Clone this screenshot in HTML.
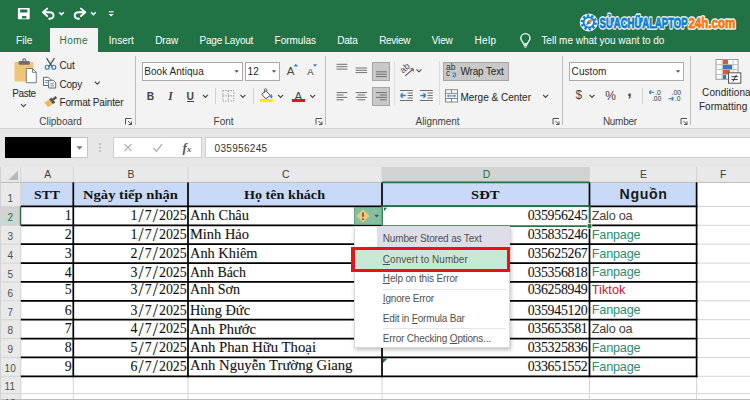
<!DOCTYPE html>
<html lang="vi"><head><meta charset="utf-8"><title>Excel - Convert to Number</title>
<style>
html,body{margin:0;padding:0}
body{width:750px;height:400px;overflow:hidden;position:relative;background:#fff;font-family:"Liberation Sans",sans-serif;font-size:10px;color:#262626}
.a{position:absolute;white-space:nowrap}
.t{position:absolute;white-space:nowrap}
.sep{position:absolute;width:1px;background:#c8c8c8}
.box{position:absolute;background:#fff;border:1px solid #ababab;box-sizing:border-box}
u{text-decoration:underline;text-underline-offset:1px;text-decoration-thickness:1px}
svg{position:absolute;left:0;top:0;overflow:visible}
</style></head><body>

<div class="a" style="left:0;top:0;width:750px;height:52px;background:#217346"></div>
<div class="a" style="left:50px;top:28px;width:48px;height:25px;background:#f3f3f3"></div>
<svg width="750" height="52" viewBox="0 0 750 52" fill="none" stroke="#fff" stroke-width="1.400">
<!-- save -->
<rect x="17.900" y="7.900" width="11.800" height="11.400" rx=".8" fill="#fff" stroke="none"/><rect x="20.200" y="9.500" width="7.200" height="3" fill="#217346" stroke="none"/><rect x="22" y="16.100" width="4.400" height="2.300" fill="#217346" stroke="none"/>
<!-- undo -->
<path d="M47.200 8.600l-4.200 3.700 4.200 3.700" stroke-width="1.900" stroke-linejoin="round" stroke-linecap="round"/><path d="M43.400 12.300h5.600c3 0 4.500 1.700 4.500 3.300s-1.500 3.200-4.300 3.200" stroke-width="1.900" stroke-linecap="round"/>
<path d="M59.200 12.300l2.300 2.300 2.300-2.300" stroke-width="1.500"/>
<!-- redo -->
<path d="M81 8.600l4.200 3.700-4.200 3.700" stroke-width="1.900" stroke-linejoin="round" stroke-linecap="round"/><path d="M84.800 12.300h-5.600c-3 0-4.500 1.700-4.500 3.300s1.500 3.200 4.300 3.200" stroke-width="1.900" stroke-linecap="round"/>
<path d="M91.100 12.300l2.300 2.300 2.300-2.300" stroke-width="1.500"/>
<!-- customize -->
<path d="M108.800 11.800h4.800" stroke-width="1.100"/><path d="M108.700 13.900h5l-2.500 2.700z" fill="#fff" stroke="none"/>
<!-- bulb -->
<g stroke-width="1.300"><path d="M523.500 44c0-2-2.700-3-2.700-5.700a4.600 4.600 0 0 1 9.200 0c0 2.700-2.700 3.700-2.700 5.700z" stroke-linejoin="round"/><path d="M523.600 45.600h3.600" stroke-width="1.100"/><path d="M524.200 47.100h2.400" stroke-width="1"/></g>
</svg>
<svg width="750" height="52" viewBox="0 0 750 52">
<g transform="translate(588.800 22.400)"><circle r="9" fill="#fff"/><circle r="6.900" fill="none" stroke="#1580d4" stroke-width="2.600" stroke-dasharray="2.400 1.935"/><circle r="6.100" fill="#1580d4"/><circle r="4.200" fill="#fff"/><path d="M-2.800 2.800l1.700-4.500 4.500-1.700-1.700 4.500z" fill="#1580d4"/><path d="M3.400-3.400l-1.700 4.500-2.800-2.800z" fill="#f5821f"/></g>
<g font-family="Liberation Sans, sans-serif" font-weight="bold" font-size="14.600" stroke-linejoin="round">
<text x="599.600" y="27.600" textLength="88" lengthAdjust="spacingAndGlyphs" fill="#fff" stroke="#fff" stroke-width="3.400">SỬACHỮALAPTOP</text>
<text x="688.400" y="27.600" textLength="46.800" lengthAdjust="spacingAndGlyphs" fill="#fff" stroke="#fff" stroke-width="3.400">24h.com</text>
<text x="599.600" y="27.600" textLength="88" lengthAdjust="spacingAndGlyphs" fill="#0f7bd2" stroke="#0f7bd2" stroke-width=".9">SỬACHỮALAPTOP</text>
<text x="688.400" y="27.600" textLength="46.800" lengthAdjust="spacingAndGlyphs" fill="#f47a18" stroke="#f47a18" stroke-width=".9">24h.com</text>
</g>
</svg>
<div class="a" style="left:0;top:52px;width:750px;height:76px;background:#f3f3f3"></div>
<div class="a" style="left:0;top:128px;width:750px;height:39px;background:#e6e6e6;border-top:1px solid #d2d2d2;box-sizing:border-box"></div>
<div class="sep" style="left:135px;top:56px;height:69px;background:#bdbdbd"></div>
<div class="sep" style="left:325px;top:56px;height:69px;background:#bdbdbd"></div>
<div class="sep" style="left:562px;top:56px;height:69px;background:#bdbdbd"></div>
<div class="sep" style="left:690px;top:56px;height:69px;background:#bdbdbd"></div>
<div class="sep" style="left:215px;top:88px;height:16px;background:#d0d0d0"></div>
<div class="sep" style="left:253px;top:88px;height:16px;background:#d0d0d0"></div>
<div class="sep" style="left:394px;top:61px;height:44px;background:#dedede"></div>
<div class="sep" style="left:439px;top:61px;height:44px;background:#dedede"></div>
<div class="sep" style="left:642px;top:88px;height:16px;background:#d0d0d0"></div>
<div class="box" style="left:142px;top:62px;width:101px;height:19px"></div>
<div class="box" style="left:245px;top:62px;width:35px;height:19px"></div>
<div class="box" style="left:569px;top:62px;width:115px;height:19px"></div>
<div class="a" style="left:372px;top:61.500px;width:18px;height:19px;background:#c8c8c8;border:1px solid #a6a6a6;box-sizing:border-box"></div>
<div class="a" style="left:372px;top:87px;width:18px;height:19px;background:#c8c8c8;border:1px solid #a6a6a6;box-sizing:border-box"></div>
<div class="a" style="left:443px;top:61.500px;width:66px;height:19px;background:#c8c8c8;border:1px solid #a6a6a6;box-sizing:border-box"></div>
<div class="a" style="left:259.600px;top:99.200px;width:13.400px;height:3.200px;background:#ffeb00"></div>
<div class="a" style="left:291.500px;top:99.200px;width:13.700px;height:3.200px;background:#e81123"></div>
<svg width="750" height="135" viewBox="0 0 750 135" fill="none">
<!-- paste -->
<rect x="14.500" y="62" width="19" height="19.600" rx="1" fill="#efc678"/><rect x="18.600" y="61" width="11.200" height="3.800" rx=".8" fill="#6e6e6e"/><circle cx="24.200" cy="60.300" r="1.500" stroke="#6e6e6e" stroke-width="1.200"/>
<path d="M26.300 68.500h6.200l3.800 3.800v10.400h-10z" fill="#fff" stroke="#7a7a7a" stroke-width="1"/><path d="M32.500 68.500v3.800h3.800" stroke="#7a7a7a" stroke-width="1"/>
<path d="M21 104.200l2.500 2.500 2.500-2.500" stroke="#444" stroke-width="1.100"/>
<!-- cut -->
<path d="M46.500 58.200l6 9M54.500 58.200l-6 9" stroke="#555" stroke-width="1.300"/><circle cx="47.200" cy="67.200" r="2" stroke="#2b7cd3" stroke-width="1.100"/><circle cx="53.800" cy="67.200" r="2" stroke="#2b7cd3" stroke-width="1.100"/>
<!-- copy -->
<path d="M43.500 77.300h5l2.200 2.200v6h-7.200z" fill="#fff" stroke="#666" stroke-width="1"/><path d="M45.200 80.500h3.500M45.200 82.700h2.500" stroke="#2b7cd3" stroke-width=".9"/><path d="M48.700 80.300h4.600l2.400 2.400v5.300h-7z" fill="#fff" stroke="#666" stroke-width="1"/><path d="M50.500 83.800h3.500M50.500 85.900h3.500" stroke="#2b7cd3" stroke-width=".9"/>
<path d="M94.800 81.700l2.500 2.500 2.500-2.500" stroke="#444" stroke-width="1.100"/>
<!-- format painter -->
<path d="M44.300 102.600l5.200-3.400 3.600 4.600-5 3.400z" fill="#f0b860"/><path d="M49.200 99.200l2.300-1.600 3.800 4.800-2.300 1.500z" fill="#555"/><path d="M52.200 98.700l3.400-2.800 1.600 2-3.400 2.700z" fill="#555"/>
<!-- dialog launchers -->
<g stroke="#555" stroke-width="1"><path d="M125.500 124.500v-6h6" transform="translate(0 0)"/><path d="M128 121l3.500 3.500m0-3v3h-3"/></g>
<g stroke="#555" stroke-width="1" transform="translate(190.500 0)"><path d="M125.500 124.500v-6h6"/><path d="M128 121l3.500 3.500m0-3v3h-3"/></g>
<g stroke="#555" stroke-width="1" transform="translate(427.500 0)"><path d="M125.500 124.500v-6h6"/><path d="M128 121l3.500 3.500m0-3v3h-3"/></g>
<g stroke="#555" stroke-width="1" transform="translate(555.500 0)"><path d="M125.500 124.500v-6h6"/><path d="M128 121l3.500 3.500m0-3v3h-3"/></g>
<!-- combo arrows -->
<path d="M234.500 70.300h4.400l-2.200 2.400z" fill="#555"/><path d="M271.800 70.300h4.400l-2.200 2.400z" fill="#555"/><path d="M675.900 70.300h4.400l-2.200 2.400z" fill="#555"/>
<!-- chevrons -->
<g stroke="#444" stroke-width="1.100"><path d="M202.900 94.900l2.500 2.500 2.500-2.500"/><path d="M240.400 94.900l2.500 2.500 2.500-2.500"/><path d="M278.100 94.900l2.500 2.500 2.500-2.500"/><path d="M310.100 94.900l2.500 2.500 2.500-2.500"/><path d="M416.500 69.300l2.500 2.500 2.500-2.500"/><path d="M543.100 94.900l2.500 2.500 2.500-2.500"/><path d="M589.500 94.900l2.500 2.500 2.500-2.500"/></g>
<!-- A grow/shrink -->
<path d="M293.600 66.500l2.200-2.800 2.200 2.800z" fill="#2b7cd3"/><path d="M313 64.200l2 2.600 2-2.600z" fill="#2b7cd3"/>
<!-- borders icon -->
<rect x="222.800" y="90.600" width="11" height="10.400" stroke="#9c9c9c" stroke-width="1" stroke-dasharray="1.400 1.200"/><path d="M228.300 90.600v10.400M222.800 95.800h11" stroke="#9c9c9c" stroke-width="1" stroke-dasharray="1.400 1.200"/>
<!-- fill bucket -->
<g transform="translate(-1.300 1)"><path d="M263 93.200l4.200-3.400 4.300 4.600-4.400 3.400z" fill="#fff" stroke="#555" stroke-width="1" stroke-linejoin="round"/><path d="M265.700 92v-3.300c0-1.300 2.300-1.300 2.300 0v2" stroke="#555" stroke-width=".9"/><path d="M272.600 93.400q1.800 2.600 0 3.700-1.800-1.100 0-3.700z" fill="#2b7cd3" stroke="#2b7cd3" stroke-width=".6"/></g>
<!-- align icons -->
<g stroke="#707070" stroke-width="1"><path d="M336.500 64.300h10.800M336.500 66.700h10.800M336.500 69.100h10.800"/><path d="M355.600 68h11.500M355.600 70.300h11.500M355.600 72.600h11.500"/><path d="M376 71.800h10.800M376 74.200h10.800M376 76.600h10.800"/>
<path d="M336.500 92.600h10.800M336.500 95h7M336.500 97.400h10.800M336.500 99.800h7"/><path d="M355.600 92.600h11.500M357.600 95h7.500M355.600 97.400h11.500M357.600 99.800h7.500"/><path d="M376 92.600h10.800M379.800 95h7M376 97.400h10.800M379.800 99.800h7"/></g>
<!-- orientation -->
<path d="M405.200 75.800l8-7m0 0h-2.800m2.800 0v2.800" stroke="#555" stroke-width="1.100"/>
<!-- indents -->
<g stroke="#707070" stroke-width="1"><path d="M400 90.500h12.900M407.600 93h5.300M407.600 95.500h5.300M407.600 98h5.300M400 100.500h12.900"/><path d="M419.900 90.500h12.900M427.500 93h5.300M427.500 95.500h5.300M427.500 98h5.300M419.900 100.500h12.900"/></g>
<path d="M405.800 95.500h-5.300m0 0l2.200-2.200m-2.200 2.200l2.200 2.200" stroke="#2b7cd3" stroke-width="1.300"/><path d="M420.400 95.500h5.300m0 0l-2.200-2.200m2.200 2.200l-2.200 2.200" stroke="#2b7cd3" stroke-width="1.300"/>
<!-- wrap arrow -->
<path d="M452.400 73.200h3.300v3h-2.800m0 0l1.400-1.400m-1.400 1.400l1.400 1.400" stroke="#2b7cd3" stroke-width="1"/>
<!-- merge icon -->
<rect x="445.500" y="89.800" width="12" height="12.200" fill="#fff" stroke="#858585" stroke-width="1"/><path d="M445.500 93.300h12M445.500 98.500h12M451.500 89.800v3.500M451.500 98.500v3.500" stroke="#858585" stroke-width="1"/><path d="M447.500 95.900h8m-8 0l1.500-1.500m-1.500 1.500l1.500 1.500m6.500-1.500l-1.500-1.500m1.500 1.500l-1.500 1.500" stroke="#2b7cd3" stroke-width="1"/>
<!-- decimal arrows -->
<path d="M654.200 92.300h-5m0 0l1.800-1.800m-1.800 1.800l1.800 1.800" stroke="#2b7cd3" stroke-width="1.100"/><path d="M668.500 98.700h5m0 0l-1.800-1.800m1.800 1.800l-1.800 1.800" stroke="#2b7cd3" stroke-width="1.100"/>
<!-- conditional formatting -->
<rect x="716" y="59.500" width="22" height="19.800" fill="#fff" stroke="#9a9a9a" stroke-width="1"/><path d="M722 59.500v19.800M733 59.500v19.800M716 64.500h22M716 69.500h22M716 74.500h22" stroke="#c0c0c0" stroke-width="1"/>
<rect x="722.800" y="60" width="5.200" height="4.200" fill="#dc5a36"/><rect x="722.800" y="65" width="9.200" height="4.200" fill="#3f74bd"/><rect x="722.800" y="70" width="7.200" height="4.200" fill="#dc5a36"/><rect x="722.800" y="75" width="3.400" height="4" fill="#3f74bd"/>
<rect x="728.500" y="72.800" width="12.300" height="10.400" fill="#fff" stroke="#555" stroke-width="1"/><path d="M731.500 76.700h6.300M731.500 79.600h6.300M736.500 74.800l-3.600 6.800" stroke="#333" stroke-width="1"/>
</svg>
<!-- small glyph labels inside ribbon (real text) -->
<div class="t" style="left:286.800px;top:65px;font-size:11.500px;line-height:12px;color:#444">A</div>
<div class="t" style="left:307.300px;top:67.200px;font-size:9.500px;line-height:10px;color:#3a3a3a">A</div>
<div class="t" style="left:146.800px;top:91px;font-size:10.300px;line-height:11px;font-weight:bold;color:#444">B</div>
<div class="t" style="left:168.300px;top:89.800px;font-size:11.500px;line-height:12px;font-weight:bold;font-style:italic;color:#444;font-family:'Liberation Serif',serif">I</div>
<div class="t" style="left:186.600px;top:91px;font-size:10.300px;line-height:11px;font-weight:bold;color:#444;border-bottom:1px solid #444;height:9.800px">U</div>
<div class="t" style="left:294.600px;top:89.600px;font-size:11.500px;line-height:12px;color:#444">A</div>
<div class="t" style="left:446px;top:63.800px;font-size:8.500px;line-height:6.500px;color:#333">ab<br>c</div>
<div class="t" style="left:400px;top:64px;font-size:9px;line-height:9px;color:#444;transform:rotate(-42deg);transform-origin:50% 50%">ab</div>
<div class="t" style="left:575.400px;top:89px;font-size:12px;line-height:13px;color:#444;transform:scaleY(1.12)">$</div>
<div class="t" style="left:605.200px;top:90px;font-size:12px;line-height:13px;color:#444">%</div>
<div class="t" style="left:627.300px;top:82.700px;font-size:16px;line-height:16px;font-weight:bold;color:#444">,</div>
<div class="t" style="left:651.900px;top:89.700px;font-size:6.800px;line-height:6.300px;color:#333;text-align:right;width:9px">.0<br>.00</div>
<div class="t" style="left:671.500px;top:89.700px;font-size:6.800px;line-height:6.300px;color:#333;text-align:right;width:9px">.00<br>.0</div>
<!-- formula bar -->
<div class="box" style="left:5px;top:137px;width:83px;height:21px;border-color:#c6c6c6"></div>
<div class="a" style="left:5px;top:137px;width:66.400px;height:21px;background:#000"></div>
<div class="box" style="left:113px;top:137px;width:89px;height:21px;border-color:#d0d0d0"></div>
<div class="box" style="left:205px;top:137px;width:560px;height:21px;border-color:#d0d0d0"></div>
<div class="t" style="left:182.600px;top:140.500px;font-size:13px;line-height:13px;font-style:italic;font-weight:bold;color:#555;font-family:'Liberation Serif',serif">f<span style="font-size:8.500px">x</span></div>
<svg width="750" height="170" viewBox="0 0 750 170" fill="none">
<path d="M76.500 146.200h6l-3 3.500z" fill="#777"/>
<circle cx="100" cy="144" r=".8" fill="#999"/><circle cx="100" cy="147.500" r=".8" fill="#999"/><circle cx="100" cy="151" r=".8" fill="#999"/>
<path d="M124.500 144l7 7m0-7l-7 7" stroke="#b4b4b4" stroke-width="1.200"/><path d="M153.500 148l3 3.500 5.500-7.500" stroke="#b4b4b4" stroke-width="1.300"/>
</svg>
<!-- headers -->
<div class="a" style="left:0;top:167px;width:750px;height:15.400px;background:#e9e9e9"></div>
<div class="a" style="left:382px;top:167px;width:207.500px;height:15.400px;background:#d2d2d2"></div>
<div class="a" style="left:0;top:182.400px;width:20.800px;height:218px;background:#e9e9e9"></div>
<div class="a" style="left:0;top:206.450px;width:20.800px;height:18.870px;background:#d2d2d2"></div>
<div class="a" style="left:20.800px;top:182.400px;width:675.800px;height:24px;background:#c9daf8"></div>

<svg width="750" height="400" viewBox="0 0 750 400" fill="none">
<path d="M18 170.500v9.500h-9.500z" fill="#b8b8b8"/>
<path d="M20.8 167V400" stroke="#d4d4d4" stroke-width="1"/>
<path d="M73.3 167V400" stroke="#d4d4d4" stroke-width="1"/>
<path d="M188.0 167V400" stroke="#d4d4d4" stroke-width="1"/>
<path d="M382.0 167V400" stroke="#d4d4d4" stroke-width="1"/>
<path d="M589.5 167V400" stroke="#d4d4d4" stroke-width="1"/>
<path d="M696.6 167V400" stroke="#d4d4d4" stroke-width="1"/>
<path d="M0 182.40H750" stroke="#bdbdbd" stroke-width="1"/>
<path d="M0 206.45H750" stroke="#d4d4d4" stroke-width="1"/>
<path d="M0 225.32H750" stroke="#d4d4d4" stroke-width="1"/>
<path d="M0 244.19H750" stroke="#d4d4d4" stroke-width="1"/>
<path d="M0 263.06H750" stroke="#d4d4d4" stroke-width="1"/>
<path d="M0 281.93H750" stroke="#d4d4d4" stroke-width="1"/>
<path d="M0 300.80H750" stroke="#d4d4d4" stroke-width="1"/>
<path d="M0 319.67H750" stroke="#d4d4d4" stroke-width="1"/>
<path d="M0 338.54H750" stroke="#d4d4d4" stroke-width="1"/>
<path d="M0 357.41H750" stroke="#d4d4d4" stroke-width="1"/>
<path d="M0 376.28H750" stroke="#d4d4d4" stroke-width="1"/>
<path d="M0 393.65H750" stroke="#d4d4d4" stroke-width="1"/>
<path d="M0 410.80H750" stroke="#d4d4d4" stroke-width="1"/>
<path d="M20.8 206.45H697.4" stroke="#000" stroke-width="1.700"/>
<path d="M20.8 225.32H697.4" stroke="#000" stroke-width="1.700"/>
<path d="M20.8 244.19H697.4" stroke="#000" stroke-width="1.700"/>
<path d="M20.8 263.06H697.4" stroke="#000" stroke-width="1.700"/>
<path d="M20.8 281.93H697.4" stroke="#000" stroke-width="1.700"/>
<path d="M20.8 300.80H697.4" stroke="#000" stroke-width="1.700"/>
<path d="M20.8 319.67H697.4" stroke="#000" stroke-width="1.700"/>
<path d="M20.8 338.54H697.4" stroke="#000" stroke-width="1.700"/>
<path d="M20.8 357.41H697.4" stroke="#000" stroke-width="1.700"/>
<path d="M20.8 376.28H697.4" stroke="#000" stroke-width="1.700"/>
<path d="M73.3 182.4V377.13" stroke="#000" stroke-width="1.700"/>
<path d="M188.0 182.4V377.13" stroke="#000" stroke-width="1.700"/>
<path d="M382.0 182.4V377.13" stroke="#000" stroke-width="1.700"/>
<path d="M589.5 182.4V377.13" stroke="#000" stroke-width="1.700"/>
<path d="M696.6 182.4V377.13" stroke="#000" stroke-width="1.700"/>
<path d="M382.0 182.4H589.5" stroke="#217346" stroke-width="1.800"/>
<path d="M20.500 206.45V225.32" stroke="#217346" stroke-width="1.400"/>
<rect x="382.0" y="206.25" width="207.5" height="19.87" stroke="#217346" stroke-width="1.700" fill="#fff"/>
<rect x="587.2" y="223.7" width="4.600" height="4.600" fill="#217346" stroke="#fff" stroke-width=".8"/>
<path d="M383.9 207.85h3.300l-3.300 3.300z" fill="#217346"/>
<path d="M383.0 358.4h4.500l-4.500 4.500z" fill="#217346"/>
</svg>
<div class="a" style="left:354.200px;top:206.800px;width:27.600px;height:18.600px;background:#84c0a0;border:1px solid #66a584;box-sizing:border-box"></div>
<svg width="750" height="400" viewBox="0 0 750 400" fill="none">
<path d="M363 209.500l6.500 6.500-6.500 6.500-6.500-6.500z" fill="#f6c776"/><path d="M363 212.500v4.200" stroke="#45455a" stroke-width="1.500"/><circle cx="363" cy="219.200" r=".9" fill="#45455a"/>
<path d="M374.200 214.800h5l-2.500 2.800z" fill="#505050"/>
</svg>
<div class="a" style="left:354px;top:226px;width:156px;height:122.400px;background:#fff;box-shadow:1px 2px 4px rgba(0,0,0,.25);border:1px solid #d9d9d9;box-sizing:border-box"></div>
<div class="a" style="left:377px;top:227px;width:133px;height:19.600px;background:#dedee9"></div>
<div class="a" style="left:351px;top:247px;width:159.200px;height:25px;background:#c7e9d3;border:3px solid #ee1111;border-left-width:4.200px;box-sizing:border-box"></div>
<div class="a" style="left:383px;top:289px;width:123px;height:1px;background:#e6e6e6"></div>
<div class="a" style="left:383px;top:328px;width:123px;height:1px;background:#e6e6e6"></div>
<div class="a" style="left:0;top:399px;width:750px;height:1px;background:#bcbcbc"></div>
<div class="a" style="left:0;top:167px;width:1px;height:233px;background:#d2d2d2"></div>

<div class="t" id="t0" style="left:16.00px;top:35.53px;font-size:10px;line-height:10px;letter-spacing:0.058px;color:#fff">File</div>
<div class="t" id="t1" style="left:59.60px;top:35.53px;font-size:10px;line-height:10px;letter-spacing:0.471px;color:#217346">Home</div>
<div class="t" id="t2" style="left:108.80px;top:35.53px;font-size:10px;line-height:10px;letter-spacing:-0.003px;color:#fff">Insert</div>
<div class="t" id="t3" style="left:155.20px;top:35.53px;font-size:10px;line-height:10px;letter-spacing:-0.115px;color:#fff">Draw</div>
<div class="t" id="t4" style="left:199.60px;top:35.53px;font-size:10px;line-height:10px;letter-spacing:-0.237px;color:#fff">Page Layout</div>
<div class="t" id="t5" style="left:274.60px;top:35.53px;font-size:10px;line-height:10px;letter-spacing:-0.055px;color:#fff">Formulas</div>
<div class="t" id="t6" style="left:337.20px;top:35.53px;font-size:10px;line-height:10px;letter-spacing:-0.175px;color:#fff">Data</div>
<div class="t" id="t7" style="left:379.20px;top:35.53px;font-size:10px;line-height:10px;letter-spacing:-0.319px;color:#fff">Review</div>
<div class="t" id="t8" style="left:431.70px;top:35.53px;font-size:10px;line-height:10px;letter-spacing:-0.133px;color:#fff">View</div>
<div class="t" id="t9" style="left:474.60px;top:35.53px;font-size:10px;line-height:10px;letter-spacing:0.307px;color:#fff">Help</div>
<div class="t" id="t10" style="left:541.40px;top:35.53px;font-size:10px;line-height:10px;letter-spacing:-0.016px;color:#fff">Tell me what you want to do</div>
<div class="t" id="t11" style="left:12.30px;top:88.53px;font-size:10px;line-height:10px;letter-spacing:-0.445px;color:#262626">Paste</div>
<div class="t" id="t12" style="left:59.50px;top:60.53px;font-size:10px;line-height:10px;letter-spacing:-0.131px;color:#262626">Cut</div>
<div class="t" id="t13" style="left:59.50px;top:79.64px;font-size:10px;line-height:10px;letter-spacing:-0.220px;color:#262626">Copy</div>
<div class="t" id="t14" style="left:59.50px;top:98.14px;font-size:10px;line-height:10px;letter-spacing:-0.157px;color:#262626">Format Painter</div>
<div class="t" id="t15" style="left:39.30px;top:117.44px;font-size:10px;line-height:10px;letter-spacing:-0.039px;color:#444">Clipboard</div>
<div class="t" id="t16" style="left:213.60px;top:117.23px;font-size:10px;line-height:10px;letter-spacing:-0.005px;color:#444">Font</div>
<div class="t" id="t17" style="left:415.60px;top:117.23px;font-size:10px;line-height:10px;letter-spacing:-0.059px;color:#444">Alignment</div>
<div class="t" id="t18" style="left:602.90px;top:117.23px;font-size:10px;line-height:10px;letter-spacing:-0.276px;color:#444">Number</div>
<div class="t" id="t19" style="left:144.30px;top:66.83px;font-size:10px;line-height:10px;letter-spacing:0.042px;color:#262626">Book Antiqua</div>
<div class="t" id="t20" style="left:247.60px;top:66.83px;font-size:10px;line-height:10px;letter-spacing:-0.025px;color:#262626">12</div>
<div class="t" id="t21" style="left:571.60px;top:66.83px;font-size:10px;line-height:10px;letter-spacing:0.069px;color:#262626">Custom</div>
<div class="t" id="t22" style="left:460.40px;top:67.44px;font-size:10px;line-height:10px;letter-spacing:-0.157px;color:#262626">Wrap Text</div>
<div class="t" id="t23" style="left:460.40px;top:92.83px;font-size:10px;line-height:10px;color:#262626">Merge &amp; Center</div>
<div class="t" id="t24" style="left:702.10px;top:88.34px;font-size:10px;line-height:10px;letter-spacing:0.075px;color:#262626">Conditional</div>
<div class="t" id="t25" style="left:698.90px;top:101.64px;font-size:10px;line-height:10px;letter-spacing:0.056px;color:#262626">Formatting</div>
<div class="t" id="t26" style="left:214.60px;top:144.13px;font-size:10px;line-height:10px;letter-spacing:0.305px;color:#333">035956245</div>
<div class="t" id="t27" style="left:44.20px;top:170.10px;font-size:10.4px;line-height:10.4px;color:#404040">A</div>
<div class="t" id="t28" style="left:127.50px;top:170.10px;font-size:10.4px;line-height:10.4px;color:#404040">B</div>
<div class="t" id="t29" style="left:282.10px;top:170.10px;font-size:10.4px;line-height:10.4px;color:#404040">C</div>
<div class="t" id="t30" style="left:482.70px;top:170.10px;font-size:10.4px;line-height:10.4px;color:#217346">D</div>
<div class="t" id="t31" style="left:640.10px;top:170.10px;font-size:10.4px;line-height:10.4px;color:#404040">E</div>
<div class="t" id="t32" style="left:720.10px;top:170.10px;font-size:10.4px;line-height:10.4px;color:#404040">F</div>
<div class="t" id="t33" style="left:7.40px;top:193.94px;font-size:10px;line-height:10px;color:#505050">1</div>
<div class="t" id="t34" style="left:7.40px;top:213.25px;font-size:10px;line-height:10px;color:#217346">2</div>
<div class="t" id="t35" style="left:7.40px;top:232.12px;font-size:10px;line-height:10px;color:#505050">3</div>
<div class="t" id="t36" style="left:7.40px;top:250.99px;font-size:10px;line-height:10px;color:#505050">4</div>
<div class="t" id="t37" style="left:7.40px;top:269.87px;font-size:10px;line-height:10px;color:#505050">5</div>
<div class="t" id="t38" style="left:7.40px;top:288.74px;font-size:10px;line-height:10px;color:#505050">6</div>
<div class="t" id="t39" style="left:7.40px;top:307.60px;font-size:10px;line-height:10px;color:#505050">7</div>
<div class="t" id="t40" style="left:7.40px;top:326.47px;font-size:10px;line-height:10px;color:#505050">8</div>
<div class="t" id="t41" style="left:7.40px;top:345.34px;font-size:10px;line-height:10px;color:#505050">9</div>
<div class="t" id="t42" style="left:4.60px;top:364.21px;font-size:10px;line-height:10px;color:#505050">10</div>
<div class="t" id="t43" style="left:4.60px;top:381.58px;font-size:10px;line-height:10px;color:#505050">11</div>
<div class="t" id="t44" style="left:4.60px;top:398.74px;font-size:10px;line-height:10px;color:#505050">12</div>
<div class="t" id="t45" style="left:34.00px;top:187.88px;font-size:13.4px;line-height:13.4px;font-family:'Liberation Serif',serif;transform:scaleX(1.0272);transform-origin:left center;font-weight:bold;color:#111">STT</div>
<div class="t" id="t46" style="left:82.90px;top:187.88px;font-size:13.4px;line-height:13.4px;font-family:'Liberation Serif',serif;transform:scaleX(1.0912);transform-origin:left center;font-weight:bold;color:#111">Ngày tiếp nhận</div>
<div class="t" id="t47" style="left:244.40px;top:187.88px;font-size:13.4px;line-height:13.4px;font-family:'Liberation Serif',serif;transform:scaleX(1.0569);transform-origin:left center;font-weight:bold;color:#111">Họ tên khách</div>
<div class="t" id="t48" style="left:470.90px;top:187.88px;font-size:13.4px;line-height:13.4px;font-family:'Liberation Serif',serif;transform:scaleX(1.0935);transform-origin:left center;font-weight:bold;color:#111">SĐT</div>
<div class="t" id="t49" style="left:619.60px;top:187.48px;font-size:14.2px;line-height:14.2px;letter-spacing:0.620px;font-weight:bold;color:#1a1a1a">Nguồn</div>
<div class="t" id="t50" style="right:678.20px;top:209.18px;font-size:13.9px;line-height:13.9px;font-family:'Liberation Serif',serif;color:#111;-webkit-text-stroke:.08px #111">1</div>
<div class="t" id="t51" style="left:130.40px;top:209.18px;font-size:13.9px;line-height:13.9px;font-family:'Liberation Serif',serif;letter-spacing:-0.074px;color:#111;-webkit-text-stroke:.08px #111">1<span style="font-size:18.500px;line-height:0;position:relative;top:2.300px;padding:0 1.200px">/</span>7<span style="font-size:18.500px;line-height:0;position:relative;top:2.300px;padding:0 1.200px">/</span>2025</div>
<div class="t" id="t52" style="left:190.40px;top:209.35px;font-size:13.7px;line-height:13.7px;font-family:'Liberation Serif',serif;transform:scaleX(1.0556);transform-origin:left center;color:#111;-webkit-text-stroke:.1px #111">Anh Châu</div>
<div class="t" id="t53" style="left:527.70px;top:209.18px;font-size:13.9px;line-height:13.9px;font-family:'Liberation Serif',serif;letter-spacing:-0.302px;color:#111;-webkit-text-stroke:.08px #111">035956245</div>
<div class="t" id="t54" style="left:591.80px;top:209.77px;font-size:12.7px;line-height:12.7px;letter-spacing:-0.255px;color:#4a4242">Zalo oa</div>
<div class="t" id="t55" style="right:678.20px;top:228.05px;font-size:13.9px;line-height:13.9px;font-family:'Liberation Serif',serif;color:#111;-webkit-text-stroke:.08px #111">2</div>
<div class="t" id="t56" style="left:130.40px;top:228.05px;font-size:13.9px;line-height:13.9px;font-family:'Liberation Serif',serif;letter-spacing:-0.074px;color:#111;-webkit-text-stroke:.08px #111">1<span style="font-size:18.500px;line-height:0;position:relative;top:2.300px;padding:0 1.200px">/</span>7<span style="font-size:18.500px;line-height:0;position:relative;top:2.300px;padding:0 1.200px">/</span>2025</div>
<div class="t" id="t57" style="left:190.40px;top:228.22px;font-size:13.7px;line-height:13.7px;font-family:'Liberation Serif',serif;transform:scaleX(1.0556);transform-origin:left center;color:#111;-webkit-text-stroke:.1px #111">Minh Hảo</div>
<div class="t" id="t58" style="left:527.70px;top:228.05px;font-size:13.9px;line-height:13.9px;font-family:'Liberation Serif',serif;letter-spacing:-0.302px;color:#111;-webkit-text-stroke:.08px #111">035835246</div>
<div class="t" id="t59" style="left:591.80px;top:228.64px;font-size:12.7px;line-height:12.7px;letter-spacing:-0.216px;color:#2e8b72">Fanpage</div>
<div class="t" id="t60" style="right:678.20px;top:246.92px;font-size:13.9px;line-height:13.9px;font-family:'Liberation Serif',serif;color:#111;-webkit-text-stroke:.08px #111">3</div>
<div class="t" id="t61" style="left:130.40px;top:246.92px;font-size:13.9px;line-height:13.9px;font-family:'Liberation Serif',serif;letter-spacing:-0.074px;color:#111;-webkit-text-stroke:.08px #111">2<span style="font-size:18.500px;line-height:0;position:relative;top:2.300px;padding:0 1.200px">/</span>7<span style="font-size:18.500px;line-height:0;position:relative;top:2.300px;padding:0 1.200px">/</span>2025</div>
<div class="t" id="t62" style="left:190.40px;top:247.09px;font-size:13.7px;line-height:13.7px;font-family:'Liberation Serif',serif;transform:scaleX(1.0506);transform-origin:left center;color:#111;-webkit-text-stroke:.1px #111">Anh Khiêm</div>
<div class="t" id="t63" style="left:527.70px;top:246.92px;font-size:13.9px;line-height:13.9px;font-family:'Liberation Serif',serif;letter-spacing:-0.302px;color:#111;-webkit-text-stroke:.08px #111">035625267</div>
<div class="t" id="t64" style="left:591.80px;top:247.51px;font-size:12.7px;line-height:12.7px;letter-spacing:-0.216px;color:#2e8b72">Fanpage</div>
<div class="t" id="t65" style="right:678.20px;top:265.79px;font-size:13.9px;line-height:13.9px;font-family:'Liberation Serif',serif;color:#111;-webkit-text-stroke:.08px #111">4</div>
<div class="t" id="t66" style="left:130.40px;top:265.79px;font-size:13.9px;line-height:13.9px;font-family:'Liberation Serif',serif;letter-spacing:-0.074px;color:#111;-webkit-text-stroke:.08px #111">3<span style="font-size:18.500px;line-height:0;position:relative;top:2.300px;padding:0 1.200px">/</span>7<span style="font-size:18.500px;line-height:0;position:relative;top:2.300px;padding:0 1.200px">/</span>2025</div>
<div class="t" id="t67" style="left:190.40px;top:265.96px;font-size:13.7px;line-height:13.7px;font-family:'Liberation Serif',serif;transform:scaleX(1.0159);transform-origin:left center;color:#111;-webkit-text-stroke:.1px #111">Anh Bách</div>
<div class="t" id="t68" style="left:527.70px;top:265.79px;font-size:13.9px;line-height:13.9px;font-family:'Liberation Serif',serif;letter-spacing:-0.302px;color:#111;-webkit-text-stroke:.08px #111">035356818</div>
<div class="t" id="t69" style="left:591.80px;top:266.38px;font-size:12.7px;line-height:12.7px;letter-spacing:-0.216px;color:#2e8b72">Fanpage</div>
<div class="t" id="t70" style="right:678.20px;top:282.96px;font-size:13.9px;line-height:13.9px;font-family:'Liberation Serif',serif;color:#111;-webkit-text-stroke:.08px #111">5</div>
<div class="t" id="t71" style="left:130.40px;top:282.96px;font-size:13.9px;line-height:13.9px;font-family:'Liberation Serif',serif;letter-spacing:-0.074px;color:#111;-webkit-text-stroke:.08px #111">3<span style="font-size:18.500px;line-height:0;position:relative;top:2.300px;padding:0 1.200px">/</span>7<span style="font-size:18.500px;line-height:0;position:relative;top:2.300px;padding:0 1.200px">/</span>2025</div>
<div class="t" id="t72" style="left:190.40px;top:283.13px;font-size:13.7px;line-height:13.7px;font-family:'Liberation Serif',serif;transform:scaleX(1.0266);transform-origin:left center;color:#111;-webkit-text-stroke:.1px #111">Anh Sơn</div>
<div class="t" id="t73" style="left:527.70px;top:282.96px;font-size:13.9px;line-height:13.9px;font-family:'Liberation Serif',serif;letter-spacing:-0.302px;color:#111;-webkit-text-stroke:.08px #111">036258949</div>
<div class="t" id="t74" style="left:591.80px;top:283.55px;font-size:12.7px;line-height:12.7px;letter-spacing:0.045px;color:#cc1133">Tiktok</div>
<div class="t" id="t75" style="right:678.20px;top:303.53px;font-size:13.9px;line-height:13.9px;font-family:'Liberation Serif',serif;color:#111;-webkit-text-stroke:.08px #111">6</div>
<div class="t" id="t76" style="left:130.40px;top:303.53px;font-size:13.9px;line-height:13.9px;font-family:'Liberation Serif',serif;letter-spacing:-0.074px;color:#111;-webkit-text-stroke:.08px #111">3<span style="font-size:18.500px;line-height:0;position:relative;top:2.300px;padding:0 1.200px">/</span>7<span style="font-size:18.500px;line-height:0;position:relative;top:2.300px;padding:0 1.200px">/</span>2025</div>
<div class="t" id="t77" style="left:190.40px;top:303.70px;font-size:13.7px;line-height:13.7px;font-family:'Liberation Serif',serif;transform:scaleX(1.0486);transform-origin:left center;color:#111;-webkit-text-stroke:.1px #111">Hùng Đức</div>
<div class="t" id="t78" style="left:527.70px;top:303.53px;font-size:13.9px;line-height:13.9px;font-family:'Liberation Serif',serif;letter-spacing:-0.302px;color:#111;-webkit-text-stroke:.08px #111">035945120</div>
<div class="t" id="t79" style="left:591.80px;top:304.12px;font-size:12.7px;line-height:12.7px;letter-spacing:-0.216px;color:#2e8b72">Fanpage</div>
<div class="t" id="t80" style="right:678.20px;top:322.40px;font-size:13.9px;line-height:13.9px;font-family:'Liberation Serif',serif;color:#111;-webkit-text-stroke:.08px #111">7</div>
<div class="t" id="t81" style="left:130.40px;top:322.40px;font-size:13.9px;line-height:13.9px;font-family:'Liberation Serif',serif;letter-spacing:-0.074px;color:#111;-webkit-text-stroke:.08px #111">4<span style="font-size:18.500px;line-height:0;position:relative;top:2.300px;padding:0 1.200px">/</span>7<span style="font-size:18.500px;line-height:0;position:relative;top:2.300px;padding:0 1.200px">/</span>2025</div>
<div class="t" id="t82" style="left:190.40px;top:322.57px;font-size:13.7px;line-height:13.7px;font-family:'Liberation Serif',serif;transform:scaleX(1.0613);transform-origin:left center;color:#111;-webkit-text-stroke:.1px #111">Anh Phước</div>
<div class="t" id="t83" style="left:527.70px;top:322.40px;font-size:13.9px;line-height:13.9px;font-family:'Liberation Serif',serif;letter-spacing:-0.302px;color:#111;-webkit-text-stroke:.08px #111">035653581</div>
<div class="t" id="t84" style="left:591.80px;top:322.99px;font-size:12.7px;line-height:12.7px;letter-spacing:-0.255px;color:#4a4242">Zalo oa</div>
<div class="t" id="t85" style="right:678.20px;top:341.27px;font-size:13.9px;line-height:13.9px;font-family:'Liberation Serif',serif;color:#111;-webkit-text-stroke:.08px #111">8</div>
<div class="t" id="t86" style="left:130.40px;top:341.27px;font-size:13.9px;line-height:13.9px;font-family:'Liberation Serif',serif;letter-spacing:-0.074px;color:#111;-webkit-text-stroke:.08px #111">5<span style="font-size:18.500px;line-height:0;position:relative;top:2.300px;padding:0 1.200px">/</span>7<span style="font-size:18.500px;line-height:0;position:relative;top:2.300px;padding:0 1.200px">/</span>2025</div>
<div class="t" id="t87" style="left:190.40px;top:341.44px;font-size:13.7px;line-height:13.7px;font-family:'Liberation Serif',serif;transform:scaleX(1.0765);transform-origin:left center;color:#111;-webkit-text-stroke:.1px #111">Anh Phan Hữu Thoại</div>
<div class="t" id="t88" style="left:527.70px;top:341.27px;font-size:13.9px;line-height:13.9px;font-family:'Liberation Serif',serif;letter-spacing:-0.302px;color:#111;-webkit-text-stroke:.08px #111">035325836</div>
<div class="t" id="t89" style="left:591.80px;top:341.86px;font-size:12.7px;line-height:12.7px;letter-spacing:-0.216px;color:#2e8b72">Fanpage</div>
<div class="t" id="t90" style="right:678.20px;top:360.14px;font-size:13.9px;line-height:13.9px;font-family:'Liberation Serif',serif;color:#111;-webkit-text-stroke:.08px #111">9</div>
<div class="t" id="t91" style="left:130.40px;top:360.14px;font-size:13.9px;line-height:13.9px;font-family:'Liberation Serif',serif;letter-spacing:-0.074px;color:#111;-webkit-text-stroke:.08px #111">6<span style="font-size:18.500px;line-height:0;position:relative;top:2.300px;padding:0 1.200px">/</span>7<span style="font-size:18.500px;line-height:0;position:relative;top:2.300px;padding:0 1.200px">/</span>2025</div>
<div class="t" id="t92" style="left:190.40px;top:358.81px;font-size:13.7px;line-height:13.7px;font-family:'Liberation Serif',serif;transform:scaleX(1.0749);transform-origin:left center;color:#111;-webkit-text-stroke:.1px #111">Anh Nguyễn Trường Giang</div>
<div class="t" id="t93" style="left:527.70px;top:360.14px;font-size:13.9px;line-height:13.9px;font-family:'Liberation Serif',serif;letter-spacing:-0.302px;color:#111;-webkit-text-stroke:.08px #111">033651552</div>
<div class="t" id="t94" style="left:591.80px;top:360.73px;font-size:12.7px;line-height:12.7px;letter-spacing:-0.216px;color:#2e8b72">Fanpage</div>
<div class="t" id="t95" style="left:382.80px;top:234.33px;font-size:10px;line-height:10px;letter-spacing:-0.160px;color:#505050">Number Stored as Text</div>
<div class="t" id="t96" style="left:382.80px;top:255.23px;font-size:10px;line-height:10px;letter-spacing:0.031px;color:#505050"><u>C</u>onvert to Number</div>
<div class="t" id="t97" style="left:382.80px;top:274.44px;font-size:10px;line-height:10px;letter-spacing:-0.143px;color:#505050"><u>H</u>elp on this Error</div>
<div class="t" id="t98" style="left:382.80px;top:294.34px;font-size:10px;line-height:10px;letter-spacing:-0.178px;color:#505050"><u>I</u>gnore Error</div>
<div class="t" id="t99" style="left:382.80px;top:313.54px;font-size:10px;line-height:10px;letter-spacing:-0.194px;color:#505050">Edit in <u>F</u>ormula Bar</div>
<div class="t" id="t100" style="left:382.80px;top:333.94px;font-size:10px;line-height:10px;letter-spacing:-0.166px;color:#505050">Error Checking <u>O</u>ptions...</div>
</body></html>
